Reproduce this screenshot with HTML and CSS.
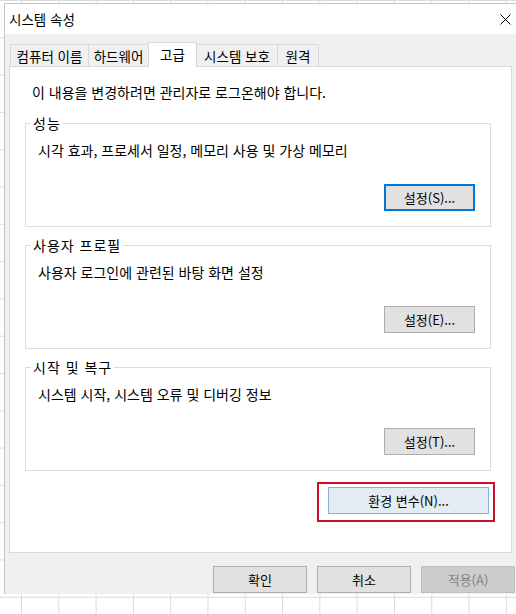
FILE: index.html
```html
<!DOCTYPE html>
<html lang="ko">
<head>
    <meta charset="UTF-8">
    <title>시스템 속성</title>
    <link rel="stylesheet" href="styles.css">
</head>
<body>
    <div class="window">
        <div class="titlebar">
            <span class="title">시스템 속성</span>
            <span class="close">
                <svg width="11" height="11" viewBox="0 0 11 11"><path d="M0.5 0.5L10.5 10.5M10.5 0.5L0.5 10.5" stroke="#000" stroke-width="1" fill="none"/></svg>
            </span>
        </div>
        <div class="tabs">
            <div class="tab tab-name">컴퓨터 이름</div>
            <div class="tab tab-hw">하드웨어</div>
            <div class="tab tab-adv active">고급</div>
            <div class="tab tab-prot">시스템 보호</div>
            <div class="tab tab-remote">원격</div>
        </div>
        <div class="panel">
            <p class="note">이 내용을 변경하려면 관리자로 로그온해야 합니다.</p>
            <fieldset class="group">
                <legend>성능</legend>
                <p class="desc">시각 효과, 프로세서 일정, 메모리 사용 및 가상 메모리</p>
                <div class="group-actions">
                    <button class="btn btn-set btn-focus">설정(S)...</button>
                </div>
            </fieldset>
            <fieldset class="group">
                <legend>사용자 프로필</legend>
                <p class="desc">사용자 로그인에 관련된 바탕 화면 설정</p>
                <div class="group-actions">
                    <button class="btn btn-set">설정(E)...</button>
                </div>
            </fieldset>
            <fieldset class="group">
                <legend>시작 및 복구</legend>
                <p class="desc">시스템 시작, 시스템 오류 및 디버깅 정보</p>
                <div class="group-actions">
                    <button class="btn btn-set">설정(T)...</button>
                </div>
            </fieldset>
            <div class="env-row">
                <div class="highlight">
                    <button class="btn btn-env">환경 변수(N)...</button>
                </div>
            </div>
        </div>
        <div class="footer">
            <button class="btn btn-footer">확인</button>
            <button class="btn btn-footer">취소</button>
            <button class="btn btn-footer btn-disabled" disabled>적용(A)</button>
        </div>
    </div>
</body>
</html>
```

FILE: styles.css
```css
html {
    overflow: hidden;
}
body {
    margin: 0;
    height: 614px;
    font-family: "Noto Sans CJK KR", "Noto Sans", sans-serif;
    font-size: 13px;
    color: #000;
    background-color: #fff;
    /* spreadsheet grid behind the dialog */
    background-image: linear-gradient(to right, #dadada 1px, transparent 1px),
                      linear-gradient(to bottom, #dadada 1px, transparent 1px);
    background-size: 37.3px 37.3px;
    background-position: 21px 0;
}
.window {
    width: 524px;
    height: 591px;
    margin: 3px 0 0 4px;
    box-sizing: border-box;
    border-top: 1px solid #c4c4c4;
    border-left: 1px solid #c4c4c4;
    background: #f0f0f0;
    overflow: hidden;
}
.titlebar {
    height: 30px;
    background: #fff;
    display: flex;
    align-items: center;
}
.title {
    flex: 1;
    padding-left: 4px;
    line-height: 20px;
    font-size: 13.5px;
}
.close {
    width: 46px;
    height: 30px;
    display: flex;
    align-items: center;
    justify-content: center;
}
.tabs {
    display: flex;
    align-items: flex-end;
    padding: 8px 0 0 5px;
}
.tab {
    height: 22px;
    box-sizing: border-box;
    border: 1px solid #d9d9d9;
    border-bottom: none;
    background: #f0f0f0;
    display: flex;
    align-items: center;
    justify-content: center;
    line-height: 18px;
    font-size: 13.5px;
}
.tab + .tab {
    margin-left: -1px;
}
.tab.active {
    height: 25px;
    margin-bottom: -1px;
    padding-bottom: 3px;
    background: #fff;
    position: relative;
    z-index: 1;
}
.tab-name { width: 79px; }
.tab-hw { width: 61px; }
.tab-adv { width: 49px; }
.tab-prot { width: 82px; }
.tab-remote { width: 42px; }
.panel {
    width: 503px;
    margin-left: 4px;
    box-sizing: border-box;
    background: #fff;
    border: 1px solid #d9d9d9;
    padding: 16px 20px 30px 15px;
}
.note {
    margin: 0 0 0 7px;
    line-height: 18px;
    font-size: 14px;
}
.group {
    margin: 14px 0 0 0;
    padding: 0 15px 15px 5px;
    border: 1px solid #dcdcdc;
}
.group + .group {
    margin-top: 10px;
}
.group legend {
    padding: 0 2px;
    line-height: 16px;
    font-size: 14px;
    letter-spacing: 1px;
}
.desc {
    margin: 10px 0 0 7px;
    line-height: 18px;
    font-size: 14px;
}
.group-actions {
    display: flex;
    justify-content: flex-end;
    margin-top: 25px;
}
.btn {
    height: 27px;
    box-sizing: border-box;
    border: 1px solid #adadad;
    background: #e1e1e1;
    font: inherit;
    color: #000;
    padding: 0;
    line-height: 18px;
}
.btn-set {
    width: 91px;
}
.btn-focus {
    border: 2px solid #0078d7;
}
.env-row {
    display: flex;
    justify-content: flex-end;
    margin: 11px -4px 0 0;
}
.highlight {
    border: 2px solid #c8102e;
    padding: 3px 4px 6px 9px;
}
.btn-env {
    width: 161px;
    background: #e3ebf3;
    border-color: #86b1dc;
}
.footer {
    display: flex;
    gap: 10px;
    padding: 13px 0 0 208px;
}
.btn-footer {
    width: 94px;
    flex-shrink: 0;
}
.btn-disabled {
    background: #cccccc;
    border-color: #bfbfbf;
    color: #838383;
}
```
